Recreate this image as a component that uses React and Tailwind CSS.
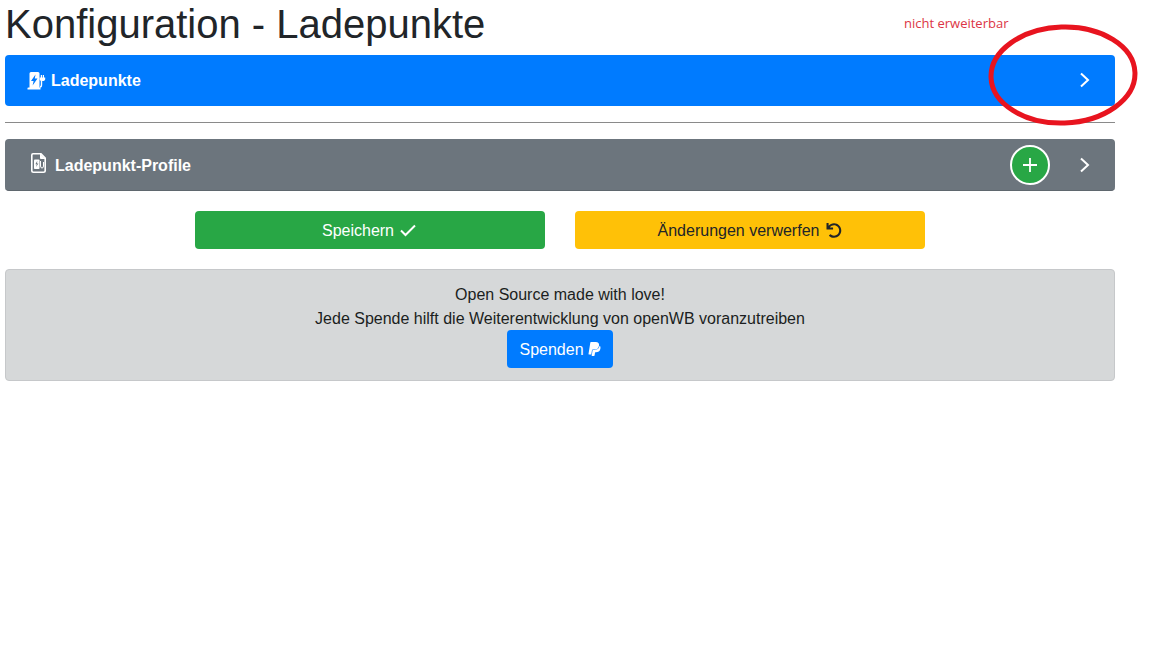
import React from "react";
import { FaUndo, FaPaypal } from "react-icons/fa";

const Chevron = () => (
  <svg width="12" height="16" viewBox="0 0 12 16" fill="none" stroke="white" strokeWidth="2" className="block">
    <path d="M2 1.5 L9 8 L2 14.5" />
  </svg>
);

const Station = () => (
  <svg width="20" height="18" viewBox="0 0 20 18" className="mr-[4px] block">
    <path fillRule="evenodd" fill="white" d="M2.5 1.5 Q2.5 0 4 0 H11 Q12.5 0 12.5 1.5 V15.5 H13.5 V17.5 H0.5 V16 Q0.5 15.5 1.5 15.5 H2.5 Z M8.5 2.5 L4 9 H6.6 L5.6 13.5 L10.5 6.5 H7.8 Z" />
    <path d="M14.5 6 V12.5 Q14.5 15 13 15" fill="none" stroke="white" strokeWidth="1.4" />
    <path d="M12.6 5.5 H18.2 V7 Q18.2 9 15.4 9 Q12.6 9 12.6 7 Z M13.8 3 H15 V5.5 H13.8 Z M15.8 3 H17 V5.5 H15.8 Z" fill="white" />
  </svg>
);

const FileStation = () => (
  <svg width="15" height="20" viewBox="0 0 15 20" className="block">
    <path d="M2 .8 H10 L14.2 5 V17.5 Q14.2 19.2 12.5 19.2 H2.5 Q.8 19.2 .8 17.5 V2 Q.8 .8 2 .8 Z" fill="none" stroke="white" strokeWidth="1.6" />
    <path d="M9.5 1 V5.5 H14" fill="white" stroke="white" strokeWidth="1" />
    <rect x="3" y="6.5" width="5.5" height="9.5" rx="0.8" fill="white" />
    <path d="M6.3 7.8 L4.4 11.2 H5.8 L5 14 L7.4 10.4 H6 Z" fill="#6c757d" />
    <path d="M9.5 8 V13 Q9.5 15 11 15 Q12.5 15 12.5 13 V9" fill="none" stroke="white" strokeWidth="1" />
  </svg>
);

export default function App() {
  return (
    <div className="relative min-h-[648px] w-[1152px] bg-white pt-0 pl-[5px] pr-[37px] font-['Liberation_Sans',Arial,sans-serif] text-[16px] leading-6 text-[#212529]">
      <h1 className="mb-[7px] text-[40px] leading-[48px] font-normal">Konfiguration - Ladepunkte</h1>

      <div className="flex h-[51px] items-center rounded-[4px] bg-[#007bff] pl-[22px] pr-[24px] text-white">
        <Station />
        <span className="font-bold">Ladepunkte</span>
        <span className="ml-auto -mt-[2px]"><Chevron /></span>
      </div>

      <hr className="mt-[16px] mb-[16px] h-px border-0 bg-[#8a8a8a]" />

      <div className="flex h-[52px] items-center rounded-[4px] border-b border-[#5f676e] bg-[#6c757d] pl-[26px] pr-[24px] text-white">
        <span className="-mt-[4px] mr-[9px]"><FileStation /></span>
        <span className="pt-[2px] font-bold">Ladepunkt-Profile</span>
        <button className="ml-auto mr-[29px] flex h-[40px] w-[40px] items-center justify-center rounded-full border-2 border-white bg-[#28a745]">
          <svg width="14" height="14" viewBox="0 0 14 14" stroke="white" strokeWidth="1.8"><path d="M7 0 V14 M0 7 H14" /></svg>
        </button>
        <Chevron />
      </div>

      <div className="mt-[20px] grid grid-cols-[350px_350px] justify-center gap-[30px]">
        <button className="flex h-[38px] items-center justify-center gap-[5px] rounded-[4px] bg-[#28a745] text-white">
          <span className="pt-[2px]">Speichern</span>
          <svg width="19" height="14" viewBox="0 0 19 14" fill="none" stroke="white" strokeWidth="2" className="block"><path d="M2 7.5 L6.5 12 L16 2.5" /></svg>
        </button>
        <button className="flex h-[38px] items-center justify-center gap-[7px] rounded-[4px] bg-[#ffc107] text-[#212529]">
          <span className="pt-[2px]">Änderungen verwerfen</span>
          <FaUndo className="h-[15px] w-[16px]" />
        </button>
      </div>

      <div className="mt-[20px] flex h-[112px] flex-col items-center rounded-[4px] border border-[#c6c8ca] bg-[#d6d8d9] pt-[13px] text-[#1b1e21]">
        <p>Open Source made with love!</p>
        <p className="-mb-px">Jede Spende hilft die Weiterentwicklung von openWB voranzutreiben</p>
        <button className="flex h-[38px] w-[106px] items-center justify-center gap-[4px] rounded-[4px] bg-[#007bff] text-white">
          <span className="pt-[2px]">Spenden</span> <FaPaypal className="h-[16px] w-[13px]" />
        </button>
      </div>

      <span className="absolute left-[904px] top-[15px] font-['Open_Sans',sans-serif] text-[13px] leading-4 text-[#dc3545]">nicht erweiterbar</span>
      <svg className="absolute left-[985px] top-[20px]" width="156" height="110" viewBox="0 0 156 110" fill="none">
        <ellipse cx="78" cy="55" rx="72" ry="48" stroke="#e8141f" strokeWidth="5" transform="rotate(-2 78 55)" />
      </svg>
    </div>
  );
}
